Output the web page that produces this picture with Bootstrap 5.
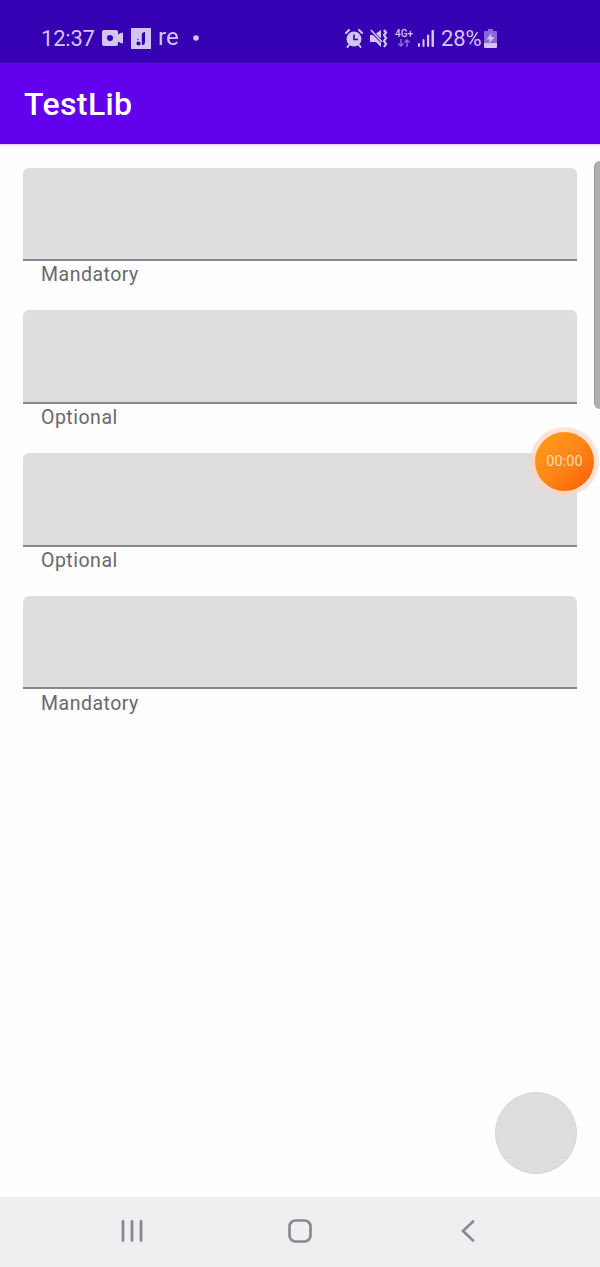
<!DOCTYPE html>
<html lang="en">
<head>
<meta charset="utf-8">
<meta name="viewport" content="width=device-width, initial-scale=1">
<title>TestLib</title>
<link rel="stylesheet" href="https://cdn.jsdelivr.net/npm/bootstrap@5.3.0/dist/css/bootstrap.min.css">
<style>
  body { font-family: Roboto, "Liberation Sans", sans-serif; background: #fefdff; width: 600px; height: 1267px; overflow: hidden; }
  svg { display: block; flex: none; }
  .status-bar { height: 63px; background: #3600b3; color: #d3c5f2; font-size: 22px; line-height: 26px; padding: 13px 103px 0 41px; }
  .status-bar .clock { width: 61px; letter-spacing: -.2px; padding-top: 1px; }
  .status-bar .notice { width: 35px; font-size: 24px; margin-left: 7px; padding-bottom: 3px; }
  .status-bar .level { margin-left: 6px; width: 43px; letter-spacing: -.1px; white-space: nowrap; padding-top: 1px; }
  .net-type { font-size: 10px; line-height: 10px; font-weight: 500; width: 18px; margin: 0 5px 0 7px; }
  .app-bar { height: 81px; background: #6200ee; box-shadow: 0 1px 1px #ecc9fc, 0 2px 4px rgba(0,0,0,.06); padding: 0 24px; }
  .app-bar h1 { font-size: 32px; font-weight: 500; letter-spacing: .4px; line-height: 38px; }
  .fields { padding: 23.5px 23.5px 0 23px; }
  .field { height: 142.8px; }
  .field-box { height: 93.5px; background: #dfdde0; border: 0; border-bottom: 2px solid #89878b; border-radius: 6px 6px 0 0; padding: 0; }
  .field-box:focus { background: #d8d6da; border-color: #6200ee; box-shadow: none; }
  .field-hint { font-size: 19.5px; line-height: 24px; letter-spacing: .5px; color: #6a686c; padding-left: 18px; margin-top: 2.4px; }
  .scroll-thumb { left: 594px; top: 161px; width: 12px; height: 248px; background: #afb0ae; border-left: 1px solid #9b9c9a; border-radius: 6px; }
  .timer { left: 530px; top: 427px; width: 69px; height: 69px; background: rgba(253,213,190,.65); }
  .timer-core { width: 59px; height: 59px; background: linear-gradient(135deg, #ff971b 15%, #ff8616 50%, #fa5f08 95%); color: #ffdab5; font-size: 14.5px; letter-spacing: .1px; }
  .fab { width: 82px; height: 82px; background: #dfdde0; border: 1px solid #d6d5d7; margin: 0 23px 23px; }
  .nav-keys { height: 70px; background: #f0eef1; color: #8b898d; }
  .key { width: 168px; height: 68px; border: 0; background: none; color: inherit; padding: 0; }
</style>
<script src="https://cdn.jsdelivr.net/npm/bootstrap@5.3.0/dist/js/bootstrap.bundle.min.js"></script>
</head>
<body class="d-flex flex-column position-relative">
  <header class="status-bar d-flex align-items-center justify-content-between">
    <div class="d-flex align-items-center">
      <span class="clock">12:37</span>
      <svg width="22" height="16" viewBox="0 0 22 16" fill="currentColor"><path fill-rule="evenodd" d="M2 0h12q2 0 2 2v2.500l3-1.800h2v10.600h-2l-3-1.800V14q0 2-2 2H2q-2 0-2-2V2q0-2 2-2zm6 5a3 3 0 1 0 0 6 3 3 0 0 0 0-6z"/></svg>
      <svg style="margin-left:7px" width="20" height="21" viewBox="0 0 20 21"><path fill="currentColor" d="M0 0h20v21H0z"/><path d="M10.800 13.500V7q0-3 3.200-3v9.500q0 4-3.200 3.500z" fill="#3600b3"/><circle cx="7.500" cy="15.500" r="2.100" fill="#3600b3"/><circle cx="7" cy="11.500" r=".7" fill="#3600b3"/></svg>
      <span class="notice">re</span>
      <svg width="6" height="6" viewBox="0 0 6 6"><circle cx="3" cy="3" r="2.800" fill="currentColor"/></svg>
    </div>
    <div class="d-flex align-items-center">
      <svg width="18" height="19" viewBox="0 0 18 19" fill="none" stroke="currentColor"><circle cx="9" cy="10" r="7.500" fill="currentColor" stroke="none"/><path stroke-width="2" stroke-linecap="round" d="M1 4l3-3m10 0l3 3M4 16l-1.500 2M14 16l1.500 2"/><path d="M9 5.500v5h4" stroke="#3600b3" stroke-width="1.600"/></svg>
      <svg style="margin-left:7px" width="18" height="19" viewBox="0 0 18 19"><path fill="currentColor" d="M0 6h3l8 8v4l-5-5H0zM6 4.500L11 1v8.500z"/><path d="M1 1l11 12" stroke="currentColor" stroke-width="1.700"/><path d="M14 1l2 2.500-2 2.500 2 3-2 3 2 3-2 3" fill="none" stroke="currentColor" stroke-width="2.200"/></svg>
      <div class="net-type d-flex flex-column align-items-center">
        <span>4G+</span>
        <svg width="12" height="8" viewBox="0 0 12 8" fill="none" stroke="#8d6cda" stroke-width="1.500"><path d="M3 0v7M.5 4.500L3 7l2.500-2.500M9 8V1M6.500 3.500L9 1l2.500 2.500"/></svg>
      </div>
      <svg width="17" height="17" viewBox="0 0 17 17" fill="currentColor"><rect x="0" y="13" width="2" height="4" rx="1"/><rect x="4.500" y="9" width="2" height="8" rx="1"/><rect x="9" y="4.500" width="2.200" height="12.500" rx="1"/><rect x="13.500" y="0" width="2.500" height="17" rx="1"/></svg>
      <span class="level">28%</span>
      <svg width="13" height="19" viewBox="0 0 13 19"><path fill="#8a67d8" d="M4 0h5v2h3q1 0 1 1v11H0V3q0-1 1-1h3z"/><path fill="currentColor" d="M0 14h13v4q0 1-1 1H1q-1 0-1-1zM7.500 4L2.500 10.500h3.300L5 15l5.500-7H7z"/></svg>
    </div>
  </header>
  <nav class="app-bar d-flex align-items-center text-white"><h1 class="mb-0">TestLib</h1></nav>
  <main class="flex-grow-1 d-flex flex-column">
    <form class="fields">
      <div class="field"><input class="form-control field-box" aria-labelledby="h1"><div class="field-hint" id="h1">Mandatory</div></div>
      <div class="field"><input class="form-control field-box" aria-labelledby="h2"><div class="field-hint" id="h2">Optional</div></div>
      <div class="field"><input class="form-control field-box" aria-labelledby="h3"><div class="field-hint" id="h3">Optional</div></div>
      <div class="field"><input class="form-control field-box" aria-labelledby="h4"><div class="field-hint" id="h4">Mandatory</div></div>
    </form>
    <button type="button" class="fab rounded-circle mt-auto align-self-end"></button>
  </main>
  <footer class="nav-keys d-flex justify-content-center">
    <button type="button" class="key d-flex align-items-center justify-content-center"><svg width="22" height="22" viewBox="0 0 22 22" fill="none" stroke="currentColor" stroke-width="2.800" stroke-linecap="round"><path d="M2 1.400v19.200M11 1.400v19.200M20 1.400v19.200"/></svg></button>
    <button type="button" class="key d-flex align-items-center justify-content-center"><svg width="24" height="24" viewBox="0 0 24 24" fill="none" stroke="currentColor" stroke-width="2.700"><rect x="1.500" y="1.500" width="21" height="21" rx="6"/></svg></button>
    <button type="button" class="key d-flex align-items-center justify-content-center"><svg width="14" height="22" viewBox="0 0 14 22" fill="none" stroke="currentColor" stroke-width="2.600" stroke-linecap="round"><path d="M12 1.500L2 11l10 9.500"/></svg></button>
  </footer>
  <div class="scroll-thumb position-absolute"></div>
  <div class="timer position-absolute rounded-circle d-flex align-items-center justify-content-center"><div class="timer-core rounded-circle d-flex align-items-center justify-content-center">00:00</div></div>
</body>
</html>
